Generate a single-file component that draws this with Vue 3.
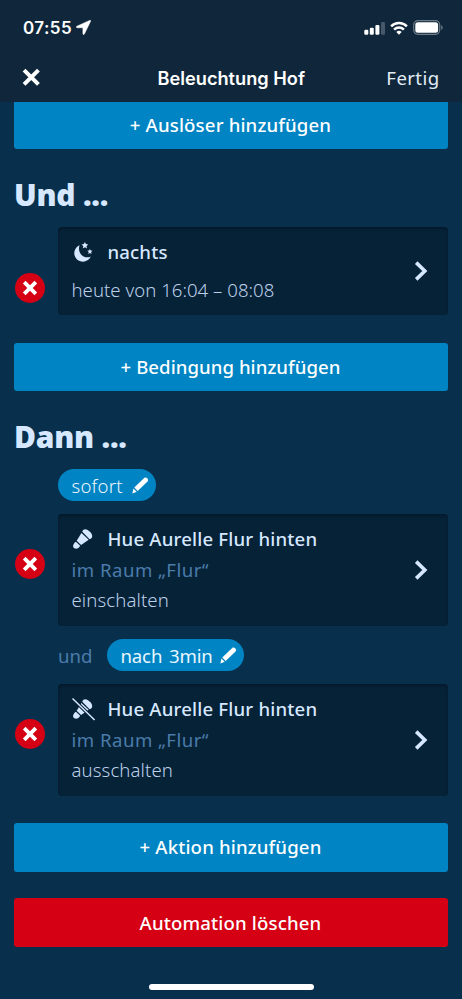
<script setup>
const actions = [
  { id: 1, prefix: '', delay: 'sofort', pill: 'now', name: 'Hue Aurelle Flur hinten', room: 'im Raum „Flur“', state: 'einschalten', off: false },
  { id: 2, prefix: 'und', delay: 'nach 3min', pill: 'later', name: 'Hue Aurelle Flur hinten', room: 'im Raum „Flur“', state: 'ausschalten', off: true },
]
</script>

<template>
  <div class="screen">
    <header class="header">
      <div class="status">
        <span class="time">07:55</span>
        <svg class="location" viewBox="0 0 15 15"><path d="M13.600.4.9 6.200c-.9.4-.7 1.500.2 1.500l5.800.1v5.900c0 .9 1.100 1.200 1.500.3L14.600 1.300c.3-.7-.3-1.200-1-.9Z" fill="#fff" stroke="#fff" stroke-width=".5" /></svg>
        <span class="spacer"></span>
        <svg class="signal" viewBox="0 0 22 14">
          <rect x="0.300" y="8.800" width="4" height="5" rx="1.200" fill="#fff" />
          <rect x="5.800" y="6.700" width="4" height="7.100" rx="1.200" fill="#fff" />
          <rect x="11.400" y="3.900" width="4" height="9.900" rx="1.200" fill="#fff" />
          <rect x="17" y="1" width="4" height="12.800" rx="1.200" fill="#47586a" />
        </svg>
        <svg class="wifi" viewBox="0 0 18 14">
          <g fill="none" stroke="#fff" stroke-width="2.500">
            <path d="M1.100 5.300a11.300 11.300 0 0 1 15.800 0" />
            <path d="M4.100 8.600a7 7 0 0 1 9.800 0" />
          </g>
          <path d="M9 13.700 6.300 11a3.900 3.900 0 0 1 5.400 0Z" fill="#fff" />
        </svg>
        <svg class="battery" viewBox="0 0 30 15">
          <rect x=".7" y=".7" width="26" height="13.600" rx="4.200" fill="none" stroke="#6d7b89" stroke-width="1.200" />
          <rect x="2.300" y="2.300" width="22.800" height="10.400" rx="2.500" fill="#fff" />
          <path d="M28.200 5.200c1.900.6 1.900 4 0 4.600Z" fill="#6d7b89" />
        </svg>
      </div>
      <nav class="nav">
        <svg class="close" viewBox="0 0 18 18"><path d="m2 2 14 14M16 2 2 16" stroke="#fff" stroke-width="3.900" /></svg>
        <h1 class="title">Beleuchtung Hof</h1>
        <span class="done">Fertig</span>
      </nav>
    </header>

    <main class="content">
      <button class="btn first">+ Auslöser hinzufügen</button>

      <h2 class="heading">Und ...</h2>
      <div class="row condition">
        <svg class="remove" viewBox="0 0 30 30"><circle cx="15" cy="15" r="15" fill="#d50014" /><path d="m9.200 9.200 11.600 11.600M20.800 9.200 9.200 20.800" stroke="#fff" stroke-width="3.800" /></svg>
        <div class="card">
          <div class="lines">
            <div class="name">
              <svg class="icon" viewBox="0 0 24 24" fill="#d6e8ff">
                <path d="M7.600 5.200a8.600 8.600 0 1 0 11.200 11.300C12.300 19.800 4.800 13.200 7.600 5.200Z" />
                <path d="m12.900 1.900 1 2.200 2.400.3-1.800 1.600.5 2.400-2.100-1.200-2.100 1.200.5-2.400-1.800-1.600 2.400-.3ZM17.900 8.900l.8 1.700 1.800.2-1.400 1.300.4 1.800-1.600-.9-1.600.9.4-1.800-1.400-1.300 1.800-.2Z" />
              </svg>
              <span class="night">nachts</span>
            </div>
            <div class="detail period">heute von 16:04 – 08:08</div>
          </div>
          <svg class="chevron" viewBox="0 0 14 20"><path d="m2.200 1.600 8.600 8.400-8.600 8.400" fill="none" stroke="#d6e8ff" stroke-width="3.600" /></svg>
        </div>
      </div>
      <button class="btn add-condition">+ Bedingung hinzufügen</button>

      <h2 class="heading">Dann ...</h2>
      <template v-for="a in actions" :key="a.id">
        <div class="timing">
          <span v-if="a.prefix" class="prefix">{{ a.prefix }}</span>
          <span class="pill" :class="a.pill">
            <span class="delay">{{ a.delay }}</span>
            <svg class="pencil" viewBox="0 0 17 17" fill="#fff"><path d="M2.300 10.600 12.200 1.100c1.900-1.700 5 1.100 3.300 3.300L5.700 13.900Z" /><path d="m1.400 11.600 3.300 3.200L.4 16.400Z" /></svg>
          </span>
        </div>
        <div class="row action">
          <svg class="remove" viewBox="0 0 30 30"><circle cx="15" cy="15" r="15" fill="#d50014" /><path d="m9.200 9.200 11.600 11.600M20.800 9.200 9.200 20.800" stroke="#fff" stroke-width="3.800" /></svg>
          <div class="card">
            <div class="lines">
              <div class="name">
                <svg class="icon" viewBox="0 0 24 24">
                  <g fill="#d6e8ff">
                    <path d="M10.300 4.700C11 2.500 13.200 1.700 15.600 3c2.500 1.300 4.300 3.500 4.600 5.800.2 1.800-.8 3.200-2.600 3.400Z" />
                    <path d="m9.400 5.900 7.300 6.900-7.600 5.200-4.400-4.200Z" />
                    <path d="m3.900 14.700 4.300 4.100c-1.400 2.600-3.700 3.700-5.800 2.500-2.100-1.300-1.600-4.400 1.500-6.600Z" />
                  </g>
                  <path v-if="a.off" d="M.5 1.500 22.600 23" stroke="#062237" stroke-width="3.500" />
                  <path v-if="a.off" d="M.5 1.500 22.600 23" stroke="#d6e8ff" stroke-width="1.500" />
                </svg>
                <span class="lamp">{{ a.name }}</span>
              </div>
              <div class="room">{{ a.room }}</div>
              <div class="detail">{{ a.state }}</div>
            </div>
            <svg class="chevron" viewBox="0 0 14 20"><path d="m2.200 1.600 8.600 8.400-8.600 8.400" fill="none" stroke="#d6e8ff" stroke-width="3.600" /></svg>
          </div>
        </div>
      </template>
      <button class="btn add-action">+ Aktion hinzufügen</button>
      <button class="btn danger">Automation löschen</button>
    </main>
    <div class="home"></div>
  </div>
</template>

<style>
body { background: #08304c; }
</style>

<style scoped>
.screen {
  width: 462px;
  height: 999px;
  box-sizing: border-box;
  overflow: hidden;
  display: flex;
  flex-direction: column;
  background: #08304c;
  color: #d6e8ff;
  font: 400 18.6px "Noto Sans", "Open Sans", sans-serif;
}
svg { display: block; flex: none; }
.header { height: 102.400px; flex: none; background: #10273b; color: #fff; }
.status { height: 55px; box-sizing: border-box; padding: 0 19px 0 23px; display: flex; align-items: center; }
.time { font: 600 17px/20px Inter, sans-serif; letter-spacing: 0.45px; }
.location { width: 15px; height: 15px; margin-left: 4px; }
.spacer { flex: 1; }
.signal { width: 22px; height: 14px; }
.wifi { width: 18px; height: 14px; margin-left: 4.500px; }
.battery { width: 30px; height: 15px; margin-left: 5px; }
.nav { height: 45px; padding: 0 22.500px 0 21.500px; display: grid; grid-template-columns: 80px 1fr 80px; align-items: center; }
.close { width: 18.500px; height: 18.500px; }
.title { margin: 0; padding-left: 1.500px; font: 600 18.200px/24px Inter, sans-serif; text-align: center; white-space: nowrap; }
.done { text-align: right; color: #e3edf8; letter-spacing: 0.400px; white-space: nowrap; }
.content { padding: 0 14px; display: flex; flex-direction: column; }
.btn { height: 48.800px; flex: none; border: 0; border-radius: 3px; padding: 0 1px 1px 0; background: #0084c3; color: #fff; font: inherit; font-weight: 480; letter-spacing: 0.150px; white-space: nowrap; }
.first { height: 47px; border-radius: 0 0 3px 3px; padding-bottom: 3px; }
.add-condition { letter-spacing: 0.050px; }
.heading { margin: 25.500px 0 12.500px; font-size: 30px; font-weight: 900; line-height: 40px; letter-spacing: -0.250px; white-space: nowrap; }
.row { display: flex; align-items: center; gap: 13px; padding-left: 1px; }
.remove { width: 30px; height: 30px; }
.card { flex: 1; box-sizing: border-box; display: flex; align-items: center; padding: 0 20px 0 13.500px; border-radius: 4px; background: #062237; box-shadow: inset 0 2px 3px rgba(0, 15, 30, 0.45); }
.lines { flex: 1; line-height: 30.700px; white-space: nowrap; }
.name { display: flex; align-items: center; gap: 12px; font-weight: 480; }
.night { letter-spacing: 0.150px; }
.lamp { letter-spacing: 0.180px; }
.icon { width: 24px; height: 24px; }
.detail { font-weight: 300; color: #bdd0ea; letter-spacing: 0.100px; }
.period { letter-spacing: 0.020px; }
.room { color: #4b7baa; letter-spacing: 0.480px; }
.chevron { width: 14px; height: 20px; }
.condition .card { height: 87.500px; }
.condition .detail { margin-top: 6.800px; }
.condition .remove { margin-top: 33px; }
.condition { margin-bottom: 27.800px; }
.action .card { height: 112px; }
.action .remove { margin-bottom: 12px; }
.timing { height: 31.500px; margin-bottom: 13px; padding-left: 44px; display: flex; align-items: center; }
.action + .timing { margin-top: 13.500px; }
.prefix { width: 49px; color: #4b7baa; }
.pill { height: 31.500px; box-sizing: border-box; border-radius: 16px; padding: 0 7px 0 13.500px; display: flex; align-items: center; justify-content: space-between; background: #0084c3; color: #eaf6ff; white-space: nowrap; }
.now { width: 97.500px; font-weight: 300; letter-spacing: 0.200px; }
.later { width: 137px; letter-spacing: -0.150px; word-spacing: 2px; }
.pencil { width: 17px; height: 17px; }
.add-action { margin-top: 27px; }
.danger { margin-top: 26.700px; background: #d50014; }
.home { width: 165px; height: 6px; flex: none; margin: 36.700px auto 0; border-radius: 3px; background: #fff; }
</style>
